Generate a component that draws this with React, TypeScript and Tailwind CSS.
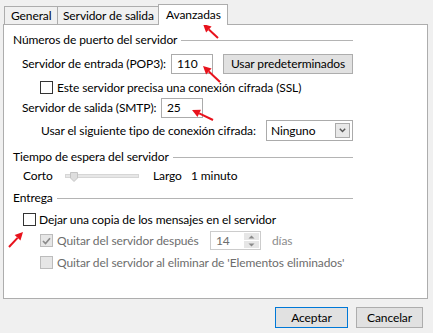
import type { ReactNode } from "react";

function Checkbox({ checked, disabled }: { checked?: boolean; disabled?: boolean }) {
	return (
		<span
			className={
				disabled
					? "flex h-[13px] w-[13px] shrink-0 items-center justify-center border border-[#bcbcbc] bg-[#e6e6e6]"
					: "flex h-[13px] w-[13px] shrink-0 items-center justify-center border border-[#333333] bg-white"
			}
		>
			{checked && (
				<svg width="9" height="8" viewBox="0 0 9 8">
					<path d="M1 4 L3.5 6.5 L8 1.2" fill="none" stroke="#8a8a8a" strokeWidth="1.7" />
				</svg>
			)}
		</span>
	);
}

function GroupTitle({ children }: { children: ReactNode }) {
	return (
		<div className="flex h-4 items-center">
			<span>{children}</span>
			<span className="ml-1 h-px flex-1 bg-[#b4b4b4]" />
		</div>
	);
}

function Arrows() {
	const arrows = [
		[218, 38, 203, 24],
		[220, 82, 203, 66],
		[213, 120, 192, 110],
		[9, 247, 23, 232],
	];
	return (
		<svg className="pointer-events-none absolute inset-0" width="433" height="333">
			{arrows.map(([x1, y1, x2, y2], i) => {
				const a = Math.atan2(y2 - y1, x2 - x1);
				const len = 8;
				const w = 4;
				const bx = x2 - len * Math.cos(a);
				const by = y2 - len * Math.sin(a);
				const px = -Math.sin(a) * w;
				const py = Math.cos(a) * w;
				return (
					<g key={i}>
						<line x1={x1} y1={y1} x2={bx} y2={by} stroke="#e8121c" strokeWidth="2" />
						<polygon
							points={`${x2},${y2} ${bx + px},${by + py} ${bx - px},${by - py}`}
							fill="#e8121c"
						/>
					</g>
				);
			})}
		</svg>
	);
}

export default function App() {
	return (
		<div className="relative h-[333px] w-[433px] whitespace-nowrap bg-[#f0f0f0] pt-[4px] font-['Lato',sans-serif] text-[12px] leading-4 tracking-[-0.1px] text-black">
			{/* tabs */}
			<div className="flex h-[20px] items-end pl-[4px]">
				<div className="flex h-[18px] w-[54px] items-center border border-b-0 border-[#adadad] pl-[6px]">
					General
				</div>
				<div className="-ml-px flex h-[18px] w-[102px] items-center border border-b-0 border-[#adadad] pl-[5px]">
					Servidor de salida
				</div>
				<div className="relative z-10 -mb-px -ml-px flex h-[21px] w-[70px] items-start border border-b-0 border-[#adadad] bg-white pl-[7px] pt-[2px]">
					Avanzadas
				</div>
			</div>

			{/* panel */}
			<div className="ml-[3px] h-[275px] w-[425px] border border-[#adadad] bg-white">
				<div className="w-[349px] pl-[9px]">
					<div className="mt-[7px]">
						<GroupTitle>Números de puerto del servidor</GroupTitle>
					</div>

					<div className="mt-[6px] flex h-[20px] items-center pl-[9px]">
						<span className="w-[149px]">Servidor de entrada (POP3):</span>
						<span className="flex h-[20px] w-[42px] items-center border border-[#ababab] pl-[5px]">110</span>
						<button className="ml-[10px] h-[20px] w-[130px] border border-[#adadad] bg-[#e1e1e1]">
							Usar predeterminados
						</button>
					</div>

					<div className="mt-[7px] flex h-[13px] items-center gap-[4px] pl-[27px]">
						<Checkbox />
						<span>Este servidor precisa una conexión cifrada (SSL)</span>
					</div>

					<div className="mt-[4px] flex h-[20px] items-center pl-[9px]">
						<span className="w-[139px]">Servidor de salida (SMTP):</span>
						<span className="flex h-[20px] w-[42px] items-center border border-[#ababab] pl-[5px]">25</span>
					</div>

					<div className="mt-[2px] flex h-[21px] items-center pl-[28px]">
						<span className="w-[225px]">Usar el siguiente tipo de conexión cifrada:</span>
						<span className="flex h-[21px] w-[87px] items-center justify-between border border-[#ababab] pl-[4px] pr-[2px]">
							<span>Ninguno</span>
							<span className="flex h-[15px] w-[15px] items-center justify-center border border-[#ababab] bg-[#e8e8e8]">
								<svg width="7" height="5" viewBox="0 0 7 5">
									<path d="M0.8 0.8 L3.5 3.6 L6.2 0.8" fill="none" stroke="#555555" strokeWidth="1.4" />
								</svg>
							</span>
						</span>
					</div>

					<div className="mt-[8px]">
						<GroupTitle>Tiempo de espera del servidor</GroupTitle>
					</div>

					<div className="mt-[3px] flex h-4 items-center pl-[10px]">
						<span className="w-[42px]">Corto</span>
						<span className="relative h-[4px] w-[74px] border border-[#d6d6d6] bg-[#e7e7e7]">
							<svg className="absolute left-[4px] top-[-3px]" width="8" height="10" viewBox="0 0 8 10">
								<polygon points="0.5,0.5 7.5,0.5 7.5,6 4,9.5 0.5,6" fill="#dedede" stroke="#c4c4c4" />
							</svg>
						</span>
						<span className="ml-[14px] w-[38px]">Largo</span>
						<span>1 minuto</span>
					</div>

					<div className="mt-[6px]">
						<GroupTitle>Entrega</GroupTitle>
					</div>

					<div className="mt-[7px] flex h-[13px] items-center gap-[3px] pl-[10px]">
						<Checkbox />
						<span>Dejar una copia de los mensajes en el servidor</span>
					</div>

					<div className="mt-[5px] flex h-[19px] items-center pl-[27px] text-[#6d6d6d]">
						<div className="flex w-[170px] items-center gap-[4px]">
							<Checkbox checked disabled />
							<span>Quitar del servidor después</span>
						</div>
						<span className="flex h-[19px] w-[51px] border border-[#cccccc]">
							<span className="flex flex-1 items-center pl-[5px]">14</span>
							<span className="flex w-[16px] flex-col gap-px py-px pr-px">
								<span className="flex flex-1 items-center justify-center bg-[#e6e6e6]">
									<svg width="7" height="4" viewBox="0 0 7 4">
										<polygon points="0.5,3.5 3.5,0.5 6.5,3.5" fill="#8a8a8a" />
									</svg>
								</span>
								<span className="flex flex-1 items-center justify-center bg-[#e6e6e6]">
									<svg width="7" height="4" viewBox="0 0 7 4">
										<polygon points="0.5,0.5 3.5,3.5 6.5,0.5" fill="#8a8a8a" />
									</svg>
								</span>
							</span>
						</span>
						<span className="ml-[11px] text-[#8c8c8c]">días</span>
					</div>

					<div className="mt-[6px] flex h-[13px] items-center gap-[4px] pl-[27px] text-[#6d6d6d]">
						<Checkbox disabled />
						<span>Quitar del servidor al eliminar de 'Elementos eliminados'</span>
					</div>
				</div>
			</div>

			{/* buttons */}
			<div className="mt-[8px] flex justify-end gap-[8px] pr-[10px]">
				<button className="h-[21px] w-[73px] border border-[#0078d7] bg-[#e1e1e1]">Aceptar</button>
				<button className="h-[21px] w-[67px] border border-[#adadad] bg-[#e1e1e1]">Cancelar</button>
			</div>

			<Arrows />
		</div>
	);
}
